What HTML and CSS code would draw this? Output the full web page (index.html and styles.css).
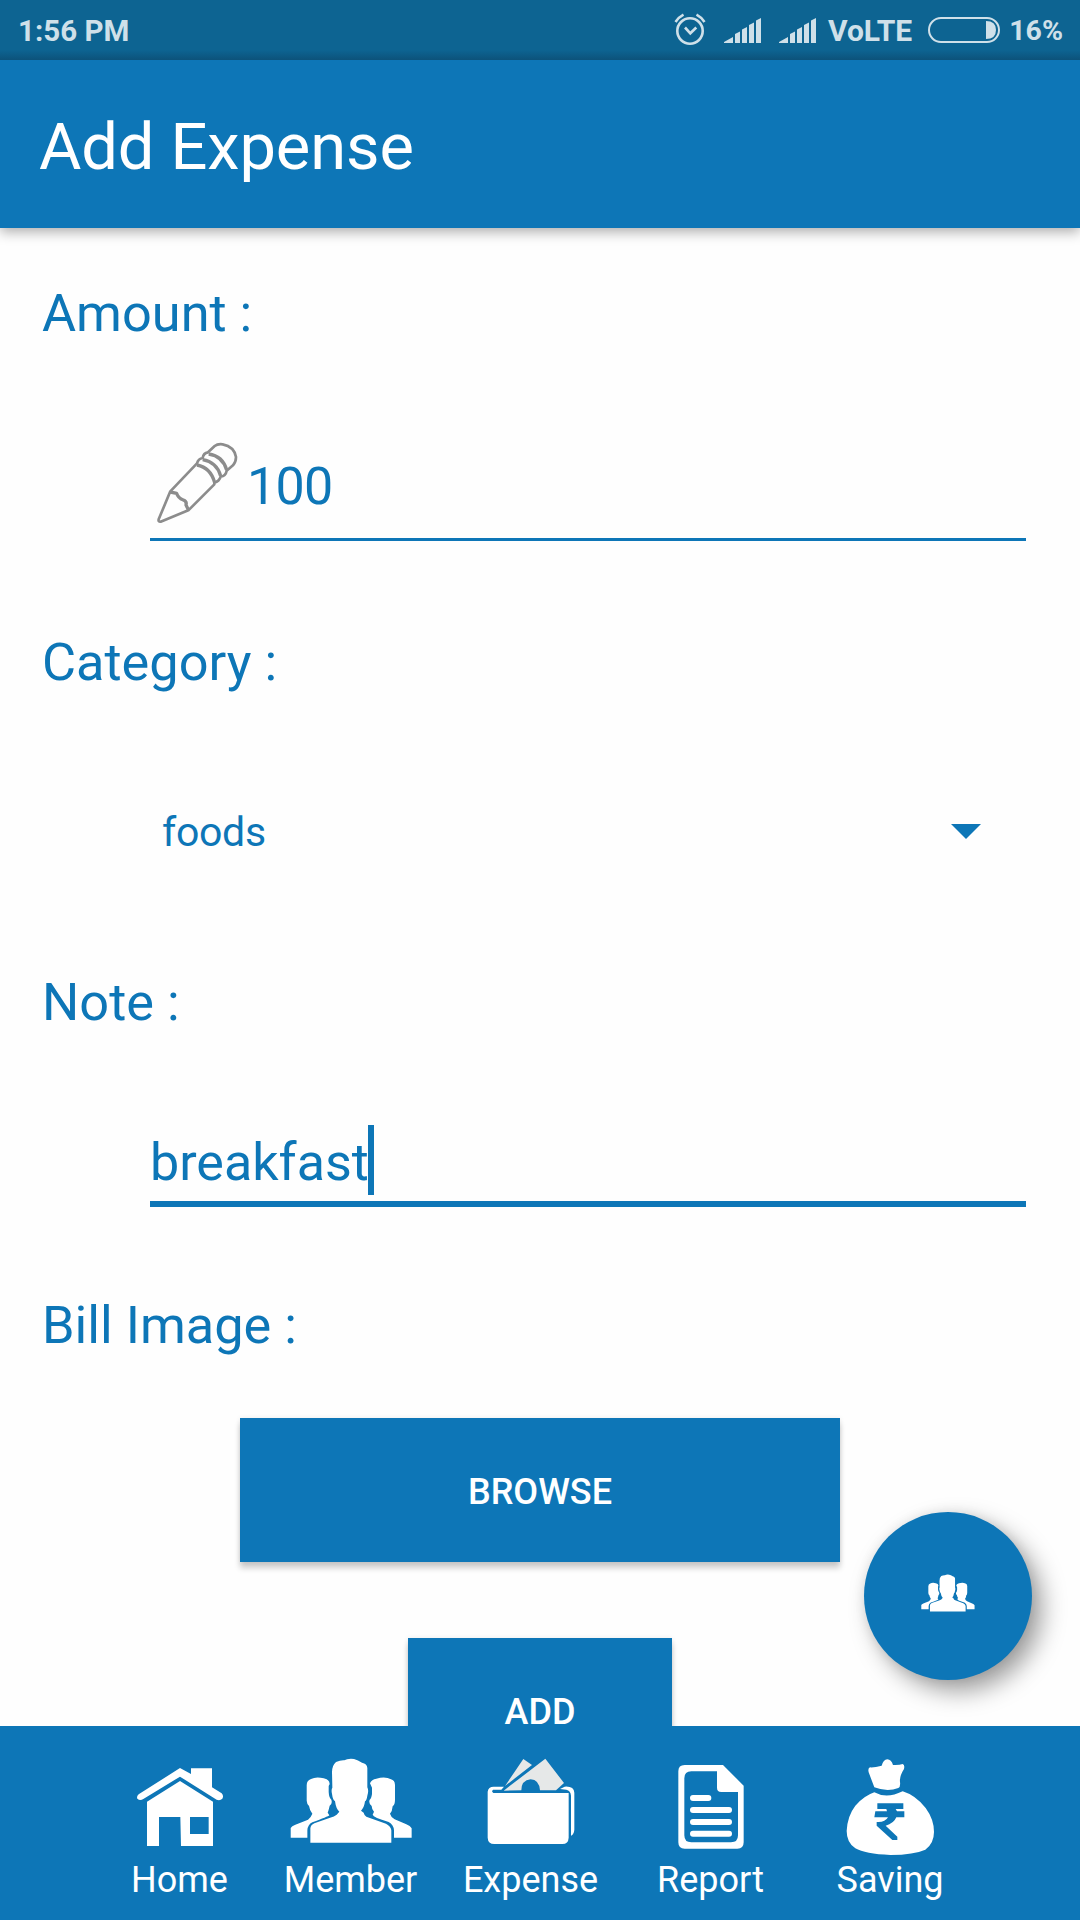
FILE: index.html
```html
<!DOCTYPE html>
<html lang="en">
<head>
<meta charset="utf-8">
<title>Add Expense</title>
<link rel="stylesheet" href="styles.css">
</head>
<body>
<svg class="defs" width="0" height="0">
  <symbol id="people" viewBox="572 82 368 256">
    <path d="M633 336V293Q634 283 645 278L690 262Q706 257 712 252L720 243Q710 235 707 212Q700 207 698 190Q695 177 699 171L698 128Q697 105 710 94Q724 88 735 89Q744 83 764 85Q776 88 788 96Q803 99 804 112V170Q809 180 804 195Q802 209 797 212Q795 230 785 240L793 246Q795 255 801 258L860 279Q875 287 876 299V336Z"/>
    <path d="M574 321V292Q577 286 588 282L626 267Q636 258 639 249Q631 240 629 226Q623 222 622 210V164Q622 149 635 145Q650 137 673 143Q690 146 691 160L688 166V184Q689 202 696 207Q700 220 691 225Q688 238 685 246L690 254Q686 258 639 275Q625 282 624 299V321Z"/>
    <path d="M937 321V293Q933 286 921 281L886 266Q875 260 872 249Q879 242 880 227Q887 222 887 208V162Q886 149 875 146Q858 136 831 144Q817 146 812 158L818 171V190Q816 204 811 207Q807 219 817 226Q817 235 824 243L820 252Q822 260 868 274Q883 282 884 299V321Z"/>
  </symbol>
  <symbol id="signal" viewBox="0 0 37 25">
    <path d="M0 25V24L9 19V25ZM11 25V16L16 13.500V25ZM18 25V11.500L23 9V25ZM25 25V7L30 4.500V25ZM32 25V2.500L37 0V25Z"/>
  </symbol>
</svg>
<div class="screen">
  <div class="status">
    <span class="clock">1:56 PM</span>
    <svg class="alarm" viewBox="0 0 32 32"><circle cx="16" cy="18" r="12.700"/><path d="M11 14.500L16.300 20.300L22.300 14.500M1.500 9Q5 4 9.500 1.700M30.500 9Q27 4 22.500 1.700"/></svg>
    <svg class="signal first"><use href="#signal"/></svg>
    <svg class="signal"><use href="#signal"/></svg>
    <span class="volte">VoLTE</span>
    <svg class="battery" viewBox="0 0 72 26"><rect x="1" y="1" width="70" height="24" rx="12"/><path d="M58 4Q68 4 68 13Q68 22 58 22Z"/></svg>
    <span class="percent">16%</span>
  </div>
  <header class="appbar"><h1>Add Expense</h1></header>
  <main class="form">
    <label class="label amount-label">Amount :</label>
    <div class="field amount">
      <svg class="pencil" viewBox="110 66 246 246"><path d="M153 214L118 298Q116 306 124 305L207 271L285 193V188Q300 184 304 170Q319 168 322 152L341 136Q350 126 350 111Q345 80 310 73Q295 71 286 78L266 97Q252 99 250 114Q237 116 233 130Z"/><path class="bands" d="M233 135Q274 143 286 188M250 119Q292 126 304 168M268 102Q310 108 322 150M153 216L172 220Q176 234 192 240Q203 244 200 255L207 269"/></svg>
      <span class="value">100</span>
    </div>
    <label class="label category-label">Category :</label>
    <div class="spinner"><span>foods</span><i class="arrow"></i></div>
    <label class="label note-label">Note :</label>
    <div class="field note"><span class="value">breakfast</span><i class="cursor"></i></div>
    <label class="label bill-label">Bill Image :</label>
    <button class="button browse">BROWSE</button>
    <button class="button add">ADD</button>
  </main>
  <button class="fab" aria-label="Members"><svg class="fab-icon"><use href="#people"/></svg></button>
  <nav class="nav">
    <a class="item home"><svg width="88" height="80" viewBox="108 111 264 240"><path d="M116 193L240 114L273 132V115H336V172L365 190Q372 197 367 206Q360 213 350 209L240 140L130 207Q120 213 112 206Q109 199 116 193Z"/><path d="M141 215L240 153L339 215V348H243L241 261H177V348H141ZM270 261V312H326V261Z" fill-rule="evenodd"/></svg><span>Home</span></a>
    <a class="item member"><svg width="122.700" height="85.300"><use href="#people"/></svg><span>Member</span></a>
    <a class="item expense"><svg width="90" height="88" viewBox="1162 83 270 264"><path class="bill" d="M1216 167L1271 86L1297 104ZM1212 181L1337 85L1393 158L1369 180H1321Q1318 148 1293 147Q1265 150 1265 180Z"/><path d="M1164 184Q1166 169 1182 169H1213L1205 178H1180Q1174 184 1181 188H1407V322Q1406 341 1388 341H1184Q1165 341 1164 322ZM1381 176L1395 169Q1423 167 1424 187V298Q1423 312 1414 316V196Q1413 181 1400 178Z"/></svg><span>Expense</span></a>
    <a class="item report"><svg width="66" height="84" viewBox="414 105 198 252"><path d="M434 105H549L611 167V337Q611 356 592 356H434Q415 356 415 337V124Q415 105 434 105ZM454 124Q433 124 433 145V316Q433 337 454 337H573Q594 337 594 316V186H544Q531 186 531 173V124Z" fill-rule="evenodd"/><path class="lines" d="M459 204H505M459 240H567M459 276H567M459 311H567"/></svg><span>Report</span></a>
    <a class="item saving"><svg width="88" height="97" viewBox="920 86 264 291"><path d="M1005 171L988 126Q985 113 992 111Q1005 112 1027 106Q1032 88 1044 87Q1056 88 1061 104Q1080 105 1090 101Q1097 104 1094 116Q1080 138 1082 155Q1084 169 1077 173Q1044 186 1005 171ZM1005 186Q1042 207 1090 183Q1129 195 1159 233Q1184 267 1184 305Q1184 340 1158 358Q1125 373 1053 374Q977 371 948 354Q922 337 922 302Q924 257 948 226Q975 196 1005 186Z"/><path class="rupee" d="M1014 219H1092V236H1069L1073 243H1095V261H1071Q1063 280 1039 286L1074 319V329H1059L1012 286V275Q1037 277 1046 261H1005L1008 243H1043L1041 236H1014Z"/></svg><span>Saving</span></a>
  </nav>
</div>
</body>
</html>
```
FILE: styles.css
```css
* { box-sizing: border-box; }
body { margin: 0; font-family: Roboto, sans-serif; background: #fefefe; }
h1 { margin: 0; font-weight: 400; }
svg { display: block; flex: none; fill: currentColor; }
.defs { position: absolute; }
.screen { position: relative; display: flex; flex-direction: column; width: 1080px; height: 1920px; overflow: hidden; color: #0d76b7; background: #fefefe; }

.status { display: flex; align-items: center; flex: none; height: 60px; padding: 0 18px 0 18px; background: linear-gradient(#0d6492 50px, #0c527a 60px); color: #cfe0e9; font-size: 30px; font-weight: 700; line-height: 60px; }
.clock { margin-right: auto; padding-top: 1px; font-size: 29.5px; }
.alarm { width: 32px; height: 32px; margin: 0 18px 2px 0; fill: none; stroke: currentColor; stroke-width: 2.6; }
.signal { width: 37px; height: 25px; }
.signal.first { margin-right: 18px; }
.volte { margin-left: 12px; margin-right: 16px; padding-top: 1px; }
.battery { width: 72px; height: 26px; margin-right: 9px; }
.battery rect { fill: none; stroke: currentColor; stroke-width: 2; }
.percent { margin-right: -1px; padding-top: 2px; font-size: 28.5px; }

.appbar { display: flex; align-items: center; flex: none; height: 168px; padding: 6px 39px 0; background: #0d76b7; color: #fff; box-shadow: 0 4px 12px rgba(0, 0, 0, .32); clip-path: inset(0 0 -24px); z-index: 1; }
.appbar h1 { font-size: 65px; letter-spacing: -0.1px; }

.form { display: flex; flex-direction: column; flex: 1; min-height: 0; overflow: hidden; }
.form > * { flex: none; }
.label { margin-left: 42px; font-size: 52.3px; line-height: 70px; }
.amount-label { margin-top: 50px; }
.field { display: flex; align-items: center; width: 876px; margin-left: 150px; font-size: 52px; }
.amount { height: 130px; margin-top: 63px; padding: 17px 0 0 6px; border-bottom: 3px solid #0d76b7; }
.amount .value { padding-top: 6px; letter-spacing: -0.7px; }
.pencil { width: 82px; height: 82px; margin-right: 9px; fill: none; stroke: #8c8c8c; stroke-width: 8; stroke-linejoin: round; }
.bands { stroke-width: 10; }
.category-label { margin-top: 86px; }
.spinner { display: flex; align-items: center; justify-content: space-between; height: 96px; margin: 87px 99px 0 162px; font-size: 41px; letter-spacing: -0.3px; }
.arrow { margin-bottom: 1px; border: 15px solid transparent; border-top-color: #0d76b7; border-bottom: 0; }
.note-label { margin-top: 87px; }
.note { height: 92px; margin-top: 78px; padding-top: 4px; border-bottom: 6px solid #0d76b7; }
.note .value { padding-top: 4px; }
.cursor { width: 6px; height: 70px; margin-left: -1px; background: #0d76b7; }
.bill-label { margin-top: 83px; }
.button { align-self: center; height: 144px; padding: 4px 0 0; border: 0; background: #0d76b7; color: #fff; font: 500 36px Roboto, sans-serif; box-shadow: 0 6px 6px rgba(0, 0, 0, .2), 0 0 5px rgba(0, 0, 0, .08); }
.browse { width: 600px; margin-top: 58px; }
.add { width: 264px; margin-top: 76px; }

.fab { position: absolute; left: 864px; top: 1512px; display: flex; align-items: center; justify-content: center; width: 168px; height: 168px; padding: 0 0 6px; border: 0; border-radius: 50%; background: #0d76b7; color: #fff; box-shadow: 10px 11px 24px rgba(0, 0, 0, .38), 0 0 12px rgba(0, 0, 0, .08); }
.fab-icon { width: 54px; height: 38px; }

.nav { display: grid; grid-template-columns: 181px 161px 199px 161px 198px; flex: none; height: 194px; padding: 0 0 19px 89px; background: #0d76b7; color: #fff; z-index: 1; }
.item { display: flex; flex-direction: column; align-items: center; justify-content: flex-end; font-size: 36px; line-height: 42px; }
.home { gap: 12px; }
.member { gap: 16px; }
.member svg, .expense svg { margin-left: 2px; }
.expense { gap: 13px; }
.report { gap: 10px; }
.saving { gap: 3px; }
.bill { fill: #e6e8e8; }
.lines { fill: none; stroke: #fff; stroke-width: 18; stroke-linecap: round; }
.rupee { fill: #0d76b7; }
```
